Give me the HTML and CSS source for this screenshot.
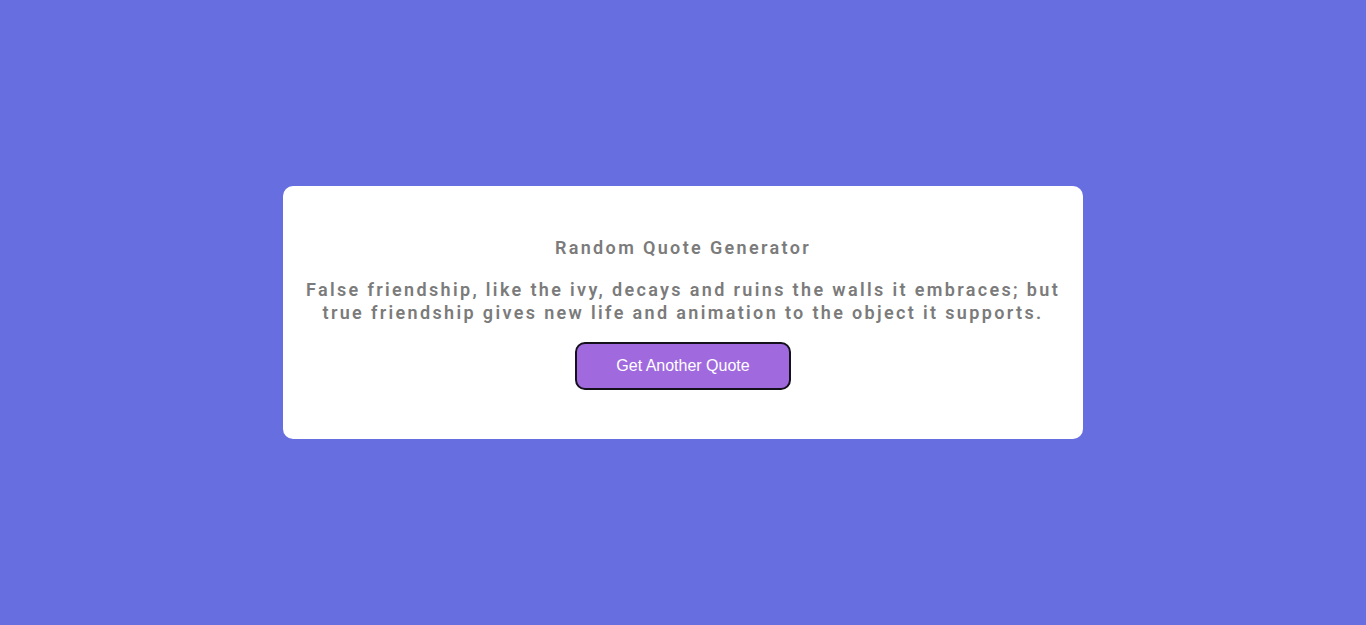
FILE: index.html
```html
<!DOCTYPE html>
<html lang="en">
<head>
<meta charset="UTF-8">
<title>Random Quote Generator</title>
<link rel="stylesheet" href="styles.css">
</head>
<body>
<main class="page">
  <section class="card">
    <h1 class="title">Random Quote Generator</h1>
    <p class="quote">False friendship, like the ivy, decays and ruins the walls it embraces; but true friendship gives new life and animation to the object it supports.</p>
    <button class="btn" type="button">Get Another Quote</button>
  </section>
</main>
</body>
</html>
```
FILE: styles.css
```css
* { box-sizing: border-box; }
html, body { margin: 0; height: 100%; }
body {
  background: #676ee0;
  font-family: Roboto, "Liberation Sans", sans-serif;
}
.page {
  min-height: 100vh;
  display: flex;
  align-items: center;
  justify-content: center;
}
.card {
  width: 800px;
  background: #ffffff;
  border-radius: 10px;
  padding: 51px 20px 49px;
  display: flex;
  flex-direction: column;
  align-items: center;
  text-align: center;
}
.title {
  margin: 0;
  font-size: 18px;
  line-height: 22px;
  font-weight: 600;
  letter-spacing: 2.35px;
  color: #7b7b7b;
}
.quote {
  margin: 19px 0 18px;
  font-size: 18px;
  line-height: 23px;
  font-weight: 600;
  letter-spacing: 2.35px;
  color: #7b7b7b;
}
.btn {
  width: 216px;
  height: 48px;
  background: #a06ade;
  color: #ffffff;
  border: 2px solid #14101c;
  border-radius: 10px;
  font-family: "Liberation Sans", Arial, sans-serif;
  font-size: 16px;
  cursor: pointer;
}
```
